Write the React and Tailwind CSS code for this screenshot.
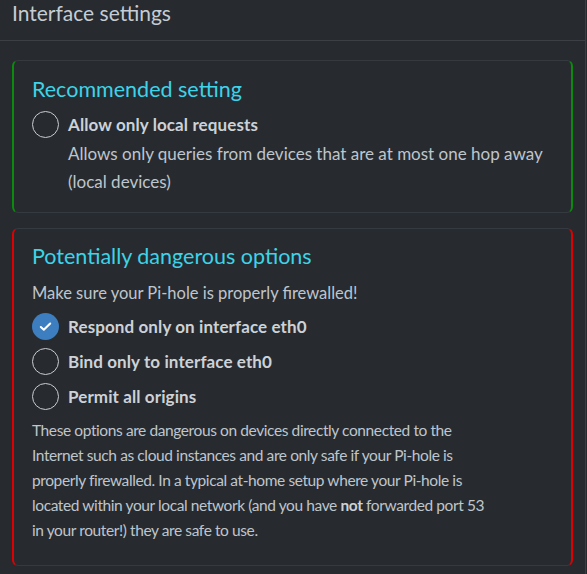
import React from 'react';

const Radio = ({ checked, label }) => {
    return (
        <div className="flex items-center h-[35px]">
            {checked ? (
                <span className="w-[27px] h-[27px] rounded-full bg-[#3c7ec0] flex items-center justify-center shrink-0">
                    <svg width="15" height="15" viewBox="0 0 16 16" fill="none">
                        <path d="M3 8.5l3.2 3L13 4.8" stroke="#ffffff" strokeWidth="2.2" strokeLinecap="round" strokeLinejoin="round" />
                    </svg>
                </span>
            ) : (
                <span className="w-[27px] h-[27px] rounded-full border-[1.5px] border-[#c9cdd1] shrink-0"></span>
            )}
            <span className="ml-[9px] font-bold text-[17px] tracking-[0.1px] text-[#cdd2d7]">{label}</span>
        </div>
    );
};

const App = () => {
    return (
        <div className="w-[587px] h-[574px] bg-[#272b30] overflow-hidden text-[#bfc5cc]" style={{ fontFamily: '"Source Sans Pro", Lato, "Noto Sans", sans-serif' }}>
            <div className="w-[586px] border-r border-[#3a3f45] h-full">
                <div className="h-[41px] border-b border-[#3b4046] pl-[12px] flex items-center">
                    <h3 className="text-[21px] text-[#c6ccd3] leading-none -mt-[15px]">Interface settings</h3>
                </div>
                <div className="px-[12px] pt-[19px]">
                    <div className="rounded-[6px] border border-[#343a40] border-l-2 border-r-2 border-l-[#0b8a0b] border-r-[#0b8a0b] pl-[18px] pr-[12px] pt-[14px] pb-[16px]">
                        <h4 className="text-[21.5px] text-[#3dd3e8] leading-[28px]">Recommended setting</h4>
                        <div className="mt-[4px]">
                            <Radio label="Allow only local requests" />
                            <p className="pl-[36px] text-[17px] leading-[28px] -mt-[2px]">Allows only queries from devices that are at most one hop away (local devices)</p>
                        </div>
                    </div>
                    <div className="mt-[15px] rounded-[6px] border border-[#343a40] border-l-2 border-r-2 border-l-[#e00000] border-r-[#e00000] pl-[18px] pr-[12px] pt-[13px] pb-[22px]">
                        <h4 className="text-[21.5px] text-[#3dd3e8] leading-[28px]">Potentially dangerous options</h4>
                        <p className="text-[16.5px] leading-[25px] mt-[11px]">Make sure your Pi-hole is properly firewalled!</p>
                        <div className="mt-[3px]">
                            <Radio checked label="Respond only on interface eth0" />
                            <Radio label="Bind only to interface eth0" />
                            <Radio label="Permit all origins" />
                        </div>
                        <p className="text-[15.5px] tracking-[-0.4px] leading-[25px] mt-[4px] w-[462px]">
                            These options are dangerous on devices directly connected to the Internet such as cloud instances and are only safe if your Pi-hole is properly firewalled. In a typical at-home setup where your Pi-hole is located within your local network (and you have <b className="font-bold text-[#cdd2d7]">not</b> forwarded port 53 in your router!) they are safe to use.
                        </p>
                    </div>
                </div>
            </div>
        </div>
    );
};

export default App;
